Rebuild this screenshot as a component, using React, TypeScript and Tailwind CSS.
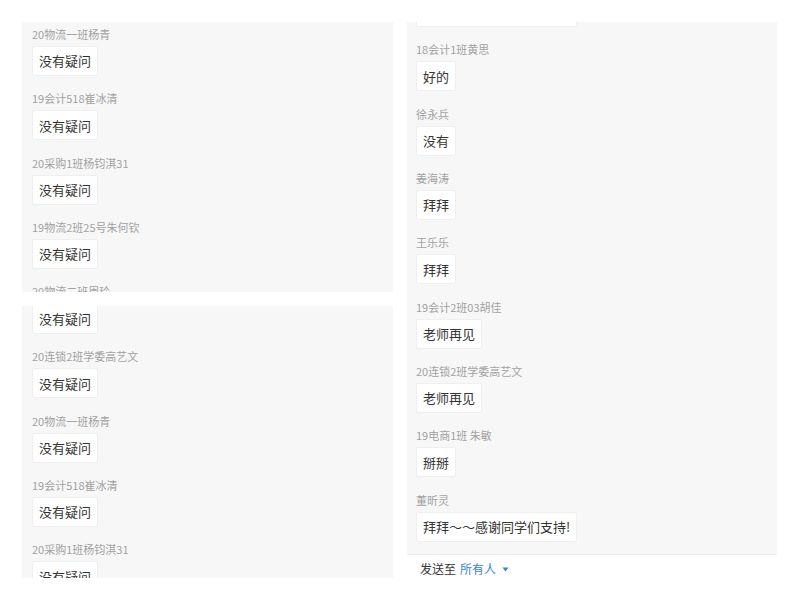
import React from 'react';

type Msg = { name: string; text: string };

const leftTop: Msg[] = [
  { name: '20物流一班杨青', text: '没有疑问' },
  { name: '19会计518崔冰清', text: '没有疑问' },
  { name: '20采购1班杨钧淇31', text: '没有疑问' },
  { name: '19物流2班25号朱何钦', text: '没有疑问' },
  { name: '20物流二班周玲', text: '没有疑问' },
];

const leftBottom: Msg[] = [
  { name: '20物流二班周玲', text: '没有疑问' },
  { name: '20连锁2班学委高艺文', text: '没有疑问' },
  { name: '20物流一班杨青', text: '没有疑问' },
  { name: '19会计518崔冰清', text: '没有疑问' },
  { name: '20采购1班杨钧淇31', text: '没有疑问' },
];

const right: Msg[] = [
  { name: '董昕灵', text: '拜拜～～感谢同学们支持!' },
  { name: '18会计1班黄思', text: '好的' },
  { name: '徐永兵', text: '没有' },
  { name: '姜海涛', text: '拜拜' },
  { name: '王乐乐', text: '拜拜' },
  { name: '19会计2班03胡佳', text: '老师再见' },
  { name: '20连锁2班学委高艺文', text: '老师再见' },
  { name: '19电商1班 朱敏', text: '掰掰' },
  { name: '董昕灵', text: '拜拜～～感谢同学们支持!' },
];

const font = { fontFamily: '"Noto Sans CJK SC", "Noto Sans", sans-serif' };

const Item: React.FC<{ msg: Msg }> = ({ msg }) => (
  <div className="flex flex-col items-start mb-[14.33px]">
    <div className="h-4 leading-4 text-[11px] text-[#a2a2a2] whitespace-nowrap">{msg.name}</div>
    <div className="mt-1 h-[30px] px-[6px] flex items-center bg-white border border-[#efefef] rounded-[2px] text-[13px] text-[#333333] whitespace-nowrap">
      {msg.text}
    </div>
  </div>
);

export default function App() {
  return (
    <div className="w-[799px] h-[599px] bg-white overflow-hidden pt-[22px] pl-[22px] flex gap-[14px]" style={font}>
      {/* left column: two cropped shots */}
      <div className="w-[371px] flex flex-col gap-[14px]">
        <div className="h-[270px] bg-[#f7f7f7] overflow-hidden px-[10px]">
          <div className="mt-[4px]">
            {leftTop.map((m, i) => (
              <Item key={i} msg={m} />
            ))}
          </div>
        </div>
        <div className="h-[272px] bg-[#f7f7f7] overflow-hidden px-[10px]">
          <div className="mt-[-22px]">
            {leftBottom.map((m, i) => (
              <Item key={i} msg={m} />
            ))}
          </div>
        </div>
      </div>

      {/* right column */}
      <div className="w-[370px] flex flex-col">
        <div className="h-[533px] bg-[#f7f7f7] overflow-hidden px-[9px] border-b border-[#ececec]">
          <div className="mt-[-45px]">
            {right.map((m, i) => (
              <Item key={i} msg={m} />
            ))}
          </div>
        </div>
        <div className="h-[28px] pl-[13px] flex items-center gap-[4px] text-[12px] bg-white">
          <span className="text-[#333333]">发送至</span>
          <span className="text-[#3b82d6]">所有人</span>
          <svg width="7" height="5" viewBox="0 0 7 5" className="ml-[2px]">
            <path d="M0.5 0.5 L6.5 0.5 L3.5 4.5 Z" fill="#3b82d6" />
          </svg>
        </div>
      </div>
    </div>
  );
}
